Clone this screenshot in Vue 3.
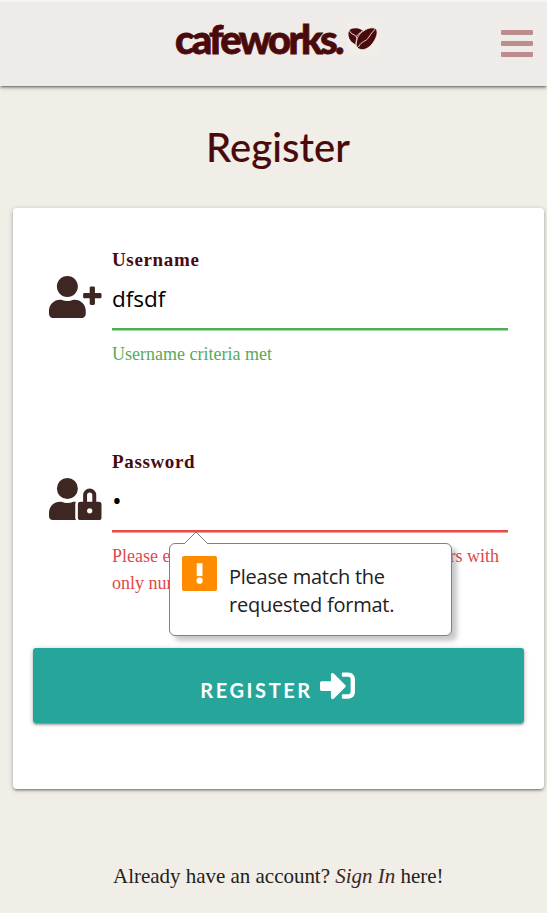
<script setup>
import { ref } from 'vue'

const username = ref('dfsdf')
const password = ref('•')
</script>

<template>
  <div class="page">
    <header class="navbar">
      <a class="brand">
        <span class="brand-name">cafeworks.</span>
        <span class="bean-box">
          <svg class="beans" viewBox="0 0 30 24" aria-hidden="true">
            <path d="M3 2C8 0 15 2 16 6C16 10 11 12 9 18C4 16 1 13 0.500 8C0.300 5 1 3 3 2Z" />
            <path class="bean-front" d="M9 20C6 15 10 7 17 3C22 0 28 0 29 4C30 9 25 17 21 20C17 23 12 24 9 20Z" />
            <path class="seam" d="M1.500 3.500C3 8 7 7 8.500 10C9.500 12 8.500 14 8 17M8.500 9.500C9.500 7 12 6.500 14 4M10.500 20C13 14 18 15 21 10C23 7 24 5 27 2.500" />
          </svg>
        </span>
      </a>
      <div class="menu"><i></i><i></i><i></i></div>
    </header>

    <h1>Register</h1>

    <main class="card">
      <div class="field">
        <svg class="field-icon" viewBox="0 0 640 512" aria-hidden="true">
          <path d="M624 208h-64v-64c0-8.800-7.200-16-16-16h-32c-8.800 0-16 7.200-16 16v64h-64c-8.800 0-16 7.200-16 16v32c0 8.800 7.200 16 16 16h64v64c0 8.800 7.200 16 16 16h32c8.800 0 16-7.200 16-16v-64h64c8.800 0 16-7.200 16-16v-32c0-8.800-7.200-16-16-16zm-400 48c70.700 0 128-57.300 128-128S294.700 0 224 0 96 57.300 96 128s57.300 128 128 128zm89.600 32h-16.700c-22.200 10.200-46.900 16-72.900 16s-50.600-5.800-72.900-16h-16.700C60.200 288 0 348.200 0 422.400V464c0 26.500 21.500 48 48 48h352c26.500 0 48-21.500 48-48v-41.600c0-74.200-60.200-134.400-134.400-134.400z" />
        </svg>
        <div class="field-body">
          <label>Username</label>
          <div class="value valid">{{ username }}</div>
          <p class="hint ok">Username criteria met</p>
        </div>
      </div>

      <div class="field">
        <svg class="field-icon" viewBox="0 0 640 512" aria-hidden="true">
          <path d="M224 256A128 128 0 1 0 96 128a128 128 0 0 0 128 128zm96 64a63.080 63.080 0 0 1 8.100-30.500c-4.800-.5-9.500-1.500-14.500-1.500h-16.700a174.080 174.080 0 0 1-145.800 0h-16.700A134.430 134.430 0 0 0 0 422.400V464a48 48 0 0 0 48 48h280.900a63.540 63.540 0 0 1-8.900-32zm288-32h-32v-80a80 80 0 0 0-160 0v80h-32a32 32 0 0 0-32 32v160a32 32 0 0 0 32 32h224a32 32 0 0 0 32-32V320a32 32 0 0 0-32-32zM496 432a32 32 0 1 1 32-32 32 32 0 0 1-32 32zm32-144h-64v-80a32 32 0 0 1 64 0z" />
        </svg>
        <div class="field-body">
          <label>Password</label>
          <div class="value invalid masked">{{ password }}</div>
          <p class="hint error"><span>Please e</span><span>rs with</span></p>
          <p class="hint error second">only num</p>
          <div class="tooltip">
            <svg class="pointer" viewBox="0 0 24 13" aria-hidden="true">
              <path d="M0 13L12 1L24 13" />
            </svg>
            <svg class="warning" viewBox="0 0 34 34" aria-hidden="true">
              <rect width="34" height="34" rx="2" fill="#ff8c00" />
              <rect x="14.300" y="7" width="5.600" height="12.500" fill="#fff" />
              <circle cx="17.100" cy="24" r="3" fill="#fff" />
            </svg>
            <div class="message">Please match the<br />requested format.</div>
          </div>
        </div>
      </div>

      <button class="submit">
        <span>REGISTER</span>
        <svg viewBox="0 0 512 512" aria-hidden="true">
          <path d="M416 448h-84c-6.600 0-12-5.400-12-12v-40c0-6.600 5.400-12 12-12h84c17.700 0 32-14.300 32-32V160c0-17.700-14.300-32-32-32h-84c-6.600 0-12-5.400-12-12V76c0-6.600 5.400-12 12-12h84c53 0 96 43 96 96v192c0 53-43 96-96 96zm-47-201L201 79c-15-15-41-4.500-41 17v96H24c-13.300 0-24 10.700-24 24v96c0 13.300 10.700 24 24 24h136v96c0 21.500 26 32 41 17l168-168c9.300-9.400 9.300-24.600 0-34z" />
        </svg>
      </button>
    </main>

    <p class="signin">Already have an account? <em>Sign In</em> here!</p>
  </div>
</template>

<style>
body {
  background: #f1eee7;
}
</style>

<style scoped>
* {
  box-sizing: border-box;
}
.page {
  height: 913px;
  overflow: hidden;
  background: #f1eee7;
  border-top: 2px solid #f4f4f6;
  font-family: "Liberation Serif", serif;
  color: #222;
}
.navbar {
  height: 84px;
  display: grid;
  grid-template-columns: 1fr auto;
  align-items: start;
  background: #eeebe8;
  box-shadow: 0 2px 2px rgba(0, 0, 0, 0.2), 0 3px 1px -2px rgba(0, 0, 0, 0.18), 0 1px 5px rgba(0, 0, 0, 0.28);
}
.brand {
  display: flex;
  padding: 14px 0 0 175px;
  color: #4a0a0c;
}
.brand-name {
  width: 172px;
  font: 900 40px/46px Lato, sans-serif;
  letter-spacing: -2.7px;
  -webkit-text-stroke: 0.8px #4a0a0c;
  white-space: nowrap;
}
.bean-box {
  width: 32px;
  height: 32px;
  margin-top: 7px;
  padding: 4px 1px;
  background: #f1ede9;
}
.beans {
  display: block;
  width: 30px;
  height: 24px;
  fill: #4a0a0c;
}
.bean-front {
  stroke: #f1ede9;
  stroke-width: 0.8;
}
.seam {
  fill: none;
  stroke: #f1ede9;
  stroke-width: 0.9;
}
.menu {
  width: 32px;
  margin: 28px 14px 0 0;
  display: grid;
  gap: 6px;
}
.menu i {
  height: 5px;
  border-radius: 1px;
  background: #bd8c8c;
}
h1 {
  margin: 35px 0 0 206px;
  font: 500 40px/52px Lato, sans-serif;
  letter-spacing: 0.1px;
  -webkit-text-stroke: 0.1px #4a0a0c;
  color: #4a0a0c;
  white-space: nowrap;
}
.card {
  width: 531px;
  height: 581px;
  margin: 35px 0 0 13px;
  padding: 39px 20px 0;
  background: #fff;
  border-radius: 4px;
  box-shadow: 0 2px 2px rgba(0, 0, 0, 0.18), 0 3px 1px -2px rgba(0, 0, 0, 0.16), 0 1px 5px rgba(0, 0, 0, 0.24);
}
.field {
  height: 202px;
  display: flex;
  padding: 0 16px;
}
.field-icon {
  width: 52.5px;
  height: 42px;
  margin: 29px 10.5px 0 0;
  fill: #3e2723;
}
.field-body {
  position: relative;
  width: 396px;
}
label {
  display: block;
  font-size: 19px;
  font-weight: 700;
  line-height: 26px;
  letter-spacing: 0.65px;
  color: #4a0a0c;
}
.value {
  height: 57px;
  font: 400 22.5px/51px "Open Sans", sans-serif;
  color: #000;
  border-bottom: 2px solid;
}
.masked {
  font-size: 26px;
}
.valid {
  border-color: #4caf50;
  box-shadow: 0 1px 0 #a5d7a7;
}
.invalid {
  border-color: #e84c43;
  box-shadow: 0 1px 0 #f2a09b;
}
.hint {
  display: flex;
  justify-content: space-between;
  margin: 11px 0 0;
  padding-right: 9px;
  font-size: 18px;
  line-height: 27px;
}
.second {
  margin: 0;
}
.ok {
  color: #58a95c;
}
.error {
  color: #dd494a;
}
.tooltip {
  position: absolute;
  left: 57px;
  top: 94px;
  width: 283px;
  height: 93px;
  display: flex;
  padding: 12px;
  gap: 12px;
  background: #fff;
  border: 1px solid #808080;
  border-radius: 6px;
  box-shadow: 5px 5px 5px rgba(0, 0, 0, 0.22);
}
.pointer {
  position: absolute;
  left: 14px;
  top: -13px;
  width: 24px;
  height: 13px;
  fill: #fff;
  stroke: #808080;
  stroke-width: 1;
}
.warning {
  width: 35px;
  height: 35px;
  flex: none;
}
.message {
  margin-top: 7px;
  font: 400 20px/28px "Open Sans", sans-serif;
  letter-spacing: -0.25px;
  white-space: nowrap;
}
.submit {
  width: 491px;
  height: 75px;
  display: flex;
  justify-content: center;
  padding: 18px 2px 0 0;
  gap: 7px;
  border: 0;
  border-radius: 3px;
  background: #26a69a;
  color: #fff;
  box-shadow: 0 2px 2px rgba(0, 0, 0, 0.2), 0 3px 1px -2px rgba(0, 0, 0, 0.18), 0 1px 5px rgba(0, 0, 0, 0.25);
  font: 700 20px/48px Lato, sans-serif;
  letter-spacing: 2.6px;
  margin-left: 0;
  margin-top: -3px;
}
.submit svg {
  width: 35px;
  height: 35px;
  margin-top: 2px;
  fill: #fff;
}
.signin {
  margin: 73px 0 0 113px;
  font-size: 21px;
  line-height: 28px;
  letter-spacing: -0.02px;
  white-space: nowrap;
}
.signin em {
  color: #3e2723;
}
</style>
